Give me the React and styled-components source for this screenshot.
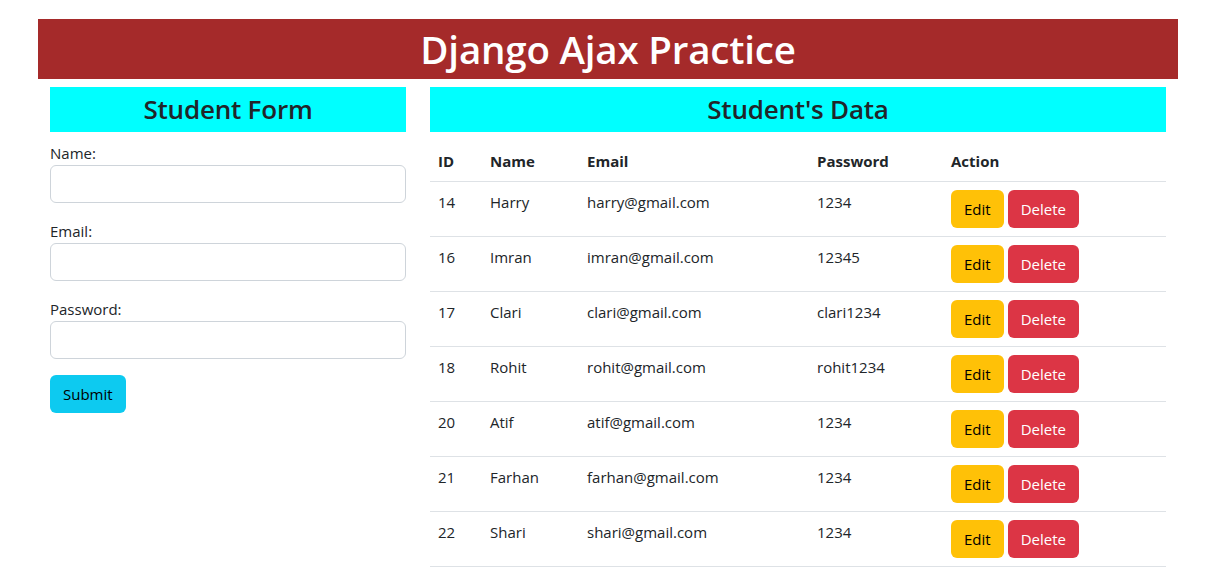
import styled, { createGlobalStyle } from "styled-components";

const students = [
  { id: 14, name: "Harry", email: "harry@gmail.com", password: "1234" },
  { id: 16, name: "Imran", email: "imran@gmail.com", password: "12345" },
  { id: 17, name: "Clari", email: "clari@gmail.com", password: "clari1234" },
  { id: 18, name: "Rohit", email: "rohit@gmail.com", password: "rohit1234" },
  { id: 20, name: "Atif", email: "atif@gmail.com", password: "1234" },
  { id: 21, name: "Farhan", email: "farhan@gmail.com", password: "1234" },
  { id: 22, name: "Shari", email: "shari@gmail.com", password: "1234" },
];

export default function App() {
  return (
    <>
      <GlobalStyle />
      <Page>
        <Container>
          <Banner>Django Ajax Practice</Banner>
          <Row>
            <Column>
              <SectionTitle>Student Form</SectionTitle>
              <form onSubmit={(e) => e.preventDefault()}>
                <Field>
                  <Label htmlFor="name">Name:</Label>
                  <Input id="name" type="text" />
                </Field>
                <Field>
                  <Label htmlFor="email">Email:</Label>
                  <Input id="email" type="email" />
                </Field>
                <Field>
                  <Label htmlFor="password">Password:</Label>
                  <Input id="password" type="password" />
                </Field>
                <Button type="submit" $variant="info">Submit</Button>
              </form>
            </Column>
            <Column>
              <SectionTitle>Student's Data</SectionTitle>
              <Table>
                <colgroup>
                  <col style={{ width: 52 }} />
                  <col style={{ width: 97 }} />
                  <col style={{ width: 230 }} />
                  <col style={{ width: 134 }} />
                  <col />
                </colgroup>
                <thead>
                  <tr>
                    <Th>ID</Th>
                    <Th>Name</Th>
                    <Th>Email</Th>
                    <Th>Password</Th>
                    <Th>Action</Th>
                  </tr>
                </thead>
                <tbody>
                  {students.map((s) => (
                    <tr key={s.id}>
                      <Td>{s.id}</Td>
                      <Td>{s.name}</Td>
                      <Td>{s.email}</Td>
                      <Td>{s.password}</Td>
                      <Td>
                        <Actions>
                          <Button $variant="warning">Edit</Button>
                          <Button $variant="danger">Delete</Button>
                        </Actions>
                      </Td>
                    </tr>
                  ))}
                </tbody>
              </Table>
            </Column>
          </Row>
        </Container>
      </Page>
    </>
  );
}

// ─── Styled Components ───────────────────────────────────────

const GlobalStyle = createGlobalStyle`
  body {
    margin: 0;
    font-family: "Open Sans", "Noto Sans", sans-serif;
    font-size: 16px;
    line-height: 1.5;
    color: #212529;
    background: #fff;
  }
  * { box-sizing: border-box; }
`;

const Page = styled.div`
  padding: 19px 0 0 38px;
`;

const Container = styled.div`
  width: 1140px;
`;

const Banner = styled.h1`
  margin: 0;
  height: 60px;
  line-height: 60px;
  background: #a52a2a;
  color: #fff;
  text-align: center;
  font-size: 38.5px;
  font-weight: 600;
  letter-spacing: -0.2px;
`;

const Row = styled.div`
  display: grid;
  grid-template-columns: 380px 760px;
`;

const Column = styled.div`
  padding: 0 12px;
`;

const SectionTitle = styled.h3`
  margin: 8px 0 9px;
  height: 45px;
  line-height: 45px;
  background: #00ffff;
  text-align: center;
  font-size: 26px;
  font-weight: 600;
  letter-spacing: -0.2px;
  color: #212529;
`;

const Field = styled.div`
  margin-bottom: 16px;
`;

const Label = styled.label`
  display: block;
  font-size: 15px;
  line-height: 24px;
`;

const Input = styled.input`
  display: block;
  width: 100%;
  height: 38px;
  padding: 6px 12px;
  font: inherit;
  border: 1px solid #ced4da;
  border-radius: 6px;
  background: #fff;
`;

const colors = {
  info: { bg: "#0dcaf0", fg: "#000" },
  warning: { bg: "#ffc107", fg: "#000" },
  danger: { bg: "#dc3545", fg: "#fff" },
};

const Button = styled.button`
  height: 38px;
  padding: 0 13px;
  border: none;
  border-radius: 6px;
  font-family: inherit;
  font-size: 15px;
  background: ${(p) => colors[p.$variant].bg};
  color: ${(p) => colors[p.$variant].fg};
  cursor: pointer;
`;

const Table = styled.table`
  width: 100%;
  border-collapse: collapse;
  table-layout: fixed;
  vertical-align: top;
`;

const Th = styled.th`
  text-align: left;
  padding: 8px;
  font-size: 15px;
  font-weight: 700;
  line-height: 24px;
  border-bottom: 1px solid #dee2e6;
`;

const Td = styled.td`
  padding: 8px;
  font-size: 15px;
  line-height: 24px;
  vertical-align: top;
  border-bottom: 1px solid #dee2e6;
`;

const Actions = styled.div`
  display: flex;
  gap: 4px;
`;
